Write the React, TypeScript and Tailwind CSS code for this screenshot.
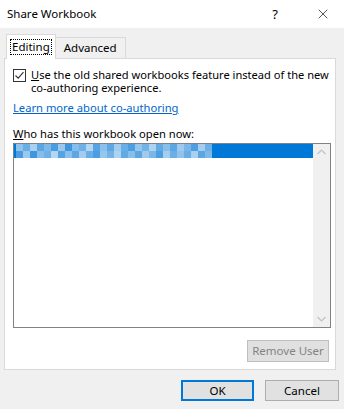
import { X } from 'lucide-react';

const blocks = [
  '#8fc3ec', '#6aaee6', '#a9d0f0', '#5aa5e2', '#7db8e9', '#4a9de0', '#9bc9ee', '#3d96de',
  '#86bdea', '#6fb1e7', '#b3d6f2', '#57a3e2', '#8ac0eb', '#5ea7e3', '#a2ccef', '#69aee6',
  '#4c9ee0', '#97c6ed', '#73b3e7', '#aed3f1', '#62aae4', '#88bfea', '#5ba6e3', '#9fcaee',
  '#7ab7e8', '#4f9fe0', '#a5cdf0', '#6cafe6',
];

function Check() {
  return (
    <span className="w-[13px] h-[13px] border border-[#333333] bg-white flex items-center justify-center shrink-0">
      <svg width="11" height="11" viewBox="0 0 11 11" fill="none">
        <path d="M1.5 5.5 L4.2 8.2 L9.5 2.2" stroke="#333333" strokeWidth="1.1" />
      </svg>
    </span>
  );
}

export default function App() {
  return (
    <div
      className="w-[344px] h-[409px] bg-[#f0f0f0] text-[11px] text-black flex flex-col overflow-hidden"
      style={{ fontFamily: '"Noto Sans", "Open Sans", sans-serif' }}
    >
      {/* title bar */}
      <div className="h-[28px] bg-white flex items-center pl-[7px] shrink-0">
        <span className="flex-1 leading-none text-[11.5px]">Share Workbook</span>
        <span className="w-[12px] text-center text-[13px] leading-none">?</span>
        <span className="w-[34px]" />
        <span className="w-[16px] flex justify-center">
          <X size={16} strokeWidth={1} />
        </span>
        <span className="w-[13px]" />
      </div>

      {/* tabs */}
      <div className="flex items-end pl-[6px] pt-[5px] h-[30px] shrink-0 relative z-10">
        <div className="h-[25px] px-[4px] bg-white border border-b-0 border-[#d9d9d9] flex items-center -mb-px">
          <span className="outline-1 outline-dotted outline-black px-[1px] leading-[14px] text-[11.5px]">Editing</span>
        </div>
        <div className="h-[21px] px-[8px] border border-l-0 border-b-0 border-[#d9d9d9] flex items-center text-[11.5px]">
          Advanced
        </div>
      </div>

      {/* panel */}
      <div className="mx-[4px] w-[332px] h-[312px] bg-white border border-[#d9d9d9] flex flex-col pl-[8px] pr-[4px] pt-[9px] shrink-0">
        <div className="flex items-start gap-[5px]">
          <div className="pt-[1px]">
            <Check />
          </div>
          <p className="leading-[13px] text-[11.1px] first-letter:underline">
            Use the old shared workbooks feature instead of the new co-authoring experience.
          </p>
        </div>
        <a className="mt-[6px] text-[#0066cc] underline leading-[15px] text-[11.2px]">Learn more about co-authoring</a>
        <div className="mt-[11px] leading-[15px] text-[11.2px] first-letter:underline">
          Who has this workbook open now:
        </div>
        <div className="mt-[2px] h-[185px] border border-[#828282] flex">
          <div className="flex-1">
            <div className="h-[14px] bg-[#0078d7] flex">
              <div className="flex h-full pl-[2px]">
                {blocks.map((c, i) => (
                  <div key={i} className="w-[7px] h-full flex flex-col">
                    <div className="flex-1" style={{ backgroundColor: c }} />
                    <div className="flex-1" style={{ backgroundColor: blocks[(i + 5) % blocks.length] }} />
                  </div>
                ))}
              </div>
            </div>
          </div>
          <div className="w-[17px] bg-[#f0f0f0] flex flex-col justify-between items-center py-[5px]">
            <svg width="9" height="6" viewBox="0 0 9 6" fill="none">
              <path d="M0.5 5 L4.5 1 L8.5 5" stroke="#c2c2c2" strokeWidth="1.2" />
            </svg>
            <svg width="9" height="6" viewBox="0 0 9 6" fill="none">
              <path d="M0.5 1 L4.5 5 L8.5 1" stroke="#c2c2c2" strokeWidth="1.2" />
            </svg>
          </div>
        </div>
        <div className="mt-[12px] flex justify-end pr-[2px]">
          <button className="w-[82px] h-[22px] bg-[#e0e0e0] border border-[#bfbfbf] text-[#838383] leading-none text-[11.5px]">
            Remove User
          </button>
        </div>
      </div>

      {/* footer buttons */}
      <div className="flex justify-end gap-[11px] pr-[5px] mt-[10px] text-[11.5px]">
        <button className="w-[73px] h-[21px] bg-[#e1e1e1] border-2 border-[#0078d7] leading-none">OK</button>
        <button className="w-[74px] h-[21px] bg-[#e1e1e1] border border-[#adadad] leading-none">Cancel</button>
      </div>
    </div>
  );
}
